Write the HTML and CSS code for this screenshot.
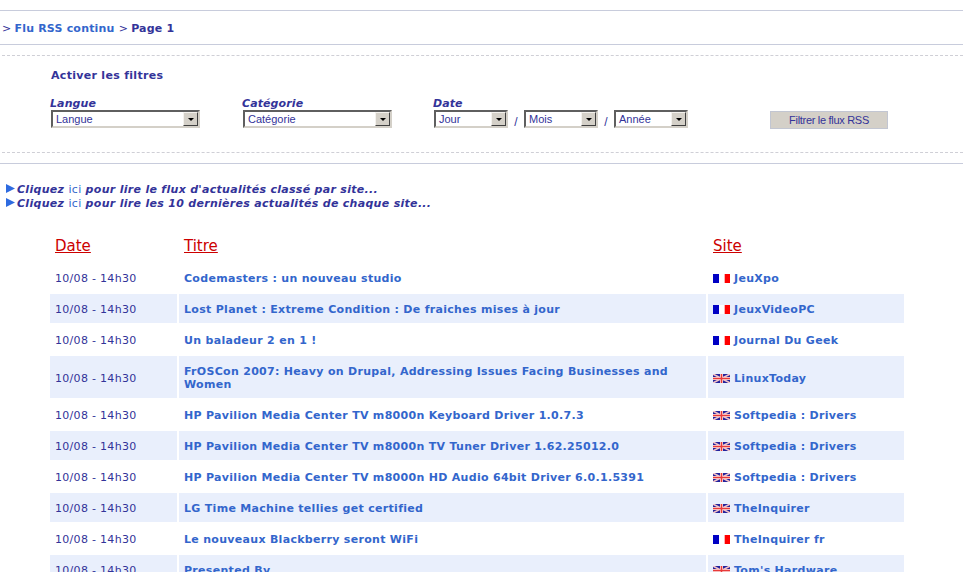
FILE: index.html
```html
<!DOCTYPE html>
<html lang="fr">
<head>
<meta charset="utf-8">
<title>Flu RSS continu</title>
<link rel="stylesheet" href="styles.css">
</head>
<body>
<svg class="defs" width="0" height="0" aria-hidden="true">
  <defs>
    <symbol id="fr" viewBox="0 0 17 9">
      <rect width="17" height="9" fill="#fff"/>
      <rect width="6" height="9" fill="#0000c4"/>
      <rect x="11" width="1" height="9" fill="#ffb0b0"/>
      <rect x="12" width="5" height="9" fill="#ff0000"/>
    </symbol>
    <symbol id="uk" viewBox="0 0 17 9">
      <rect width="17" height="9" fill="#22229c"/>
      <path d="M0 0L17 9M17 0L0 9" stroke="#f4c4c8" stroke-width="1.6"/>
      <path d="M8.5 0V9M0 4.5H17" stroke="#fbe4e4" stroke-width="3"/>
      <path d="M8.5 0V9M0 4.5H17" stroke="#e83a3a" stroke-width="1.5"/>
    </symbol>
    <symbol id="tri" viewBox="0 0 9 9">
      <path d="M0 0L9 4.5L0 9Z" fill="#2e6be0"/>
    </symbol>
  </defs>
</svg>

<div class="crumb"><span class="sep">&gt;</span> <a href="#">Flu RSS continu</a> <span class="sep">&gt;</span> Page 1</div>

<form class="filters">
  <h2 class="filters-title">Activer les filtres</h2>
  <div class="filter-row">
    <div class="field field-lang">
      <label class="field-label">Langue</label>
      <div class="select select-wide"><span class="select-text">Langue</span><span class="select-btn"><i></i></span></div>
    </div>
    <div class="field field-cat">
      <label class="field-label">Catégorie</label>
      <div class="select select-wide"><span class="select-text">Catégorie</span><span class="select-btn"><i></i></span></div>
    </div>
    <div class="field field-date">
      <label class="field-label">Date</label>
      <div class="date-row">
        <div class="select select-small"><span class="select-text">Jour</span><span class="select-btn"><i></i></span></div>
        <span class="slash">/</span>
        <div class="select select-small"><span class="select-text">Mois</span><span class="select-btn"><i></i></span></div>
        <span class="slash">/</span>
        <div class="select select-small"><span class="select-text">Année</span><span class="select-btn"><i></i></span></div>
      </div>
    </div>
    <button class="submit" type="button">Filtrer le flux RSS</button>
  </div>
</form>

<div class="intro">
  <p><svg class="tri"><use href="#tri"/></svg>Cliquez <a href="#">ici</a> pour lire le flux d'actualités classé par site...</p>
  <p><svg class="tri"><use href="#tri"/></svg>Cliquez <a href="#">ici</a> pour lire les 10 dernières actualités de chaque site...</p>
</div>

<table class="feed">
  <colgroup><col class="c-date"><col class="c-title"><col class="c-site"></colgroup>
  <thead>
    <tr><th><a href="#">Date</a></th><th><a href="#">Titre</a></th><th><a href="#">Site</a></th></tr>
  </thead>
  <tbody>
    <tr><td>10/08 - 14h30</td><td><a href="#">Codemasters : un nouveau studio</a></td><td><svg class="flag"><use href="#fr"/></svg><a href="#">JeuXpo</a></td></tr>
    <tr><td>10/08 - 14h30</td><td><a href="#">Lost Planet : Extreme Condition : De fraiches mises à jour</a></td><td><svg class="flag"><use href="#fr"/></svg><a href="#">JeuxVideoPC</a></td></tr>
    <tr><td>10/08 - 14h30</td><td><a href="#">Un baladeur 2 en 1 !</a></td><td><svg class="flag"><use href="#fr"/></svg><a href="#">Journal Du Geek</a></td></tr>
    <tr><td>10/08 - 14h30</td><td><a href="#">FrOSCon 2007: Heavy on Drupal, Addressing Issues Facing Businesses and Women</a></td><td><svg class="flag"><use href="#uk"/></svg><a href="#">LinuxToday</a></td></tr>
    <tr><td>10/08 - 14h30</td><td><a href="#">HP Pavilion Media Center TV m8000n Keyboard Driver 1.0.7.3</a></td><td><svg class="flag"><use href="#uk"/></svg><a href="#">Softpedia : Drivers</a></td></tr>
    <tr><td>10/08 - 14h30</td><td><a href="#">HP Pavilion Media Center TV m8000n TV Tuner Driver 1.62.25012.0</a></td><td><svg class="flag"><use href="#uk"/></svg><a href="#">Softpedia : Drivers</a></td></tr>
    <tr><td>10/08 - 14h30</td><td><a href="#">HP Pavilion Media Center TV m8000n HD Audio 64bit Driver 6.0.1.5391</a></td><td><svg class="flag"><use href="#uk"/></svg><a href="#">Softpedia : Drivers</a></td></tr>
    <tr><td>10/08 - 14h30</td><td><a href="#">LG Time Machine tellies get certified</a></td><td><svg class="flag"><use href="#uk"/></svg><a href="#">TheInquirer</a></td></tr>
    <tr><td>10/08 - 14h30</td><td><a href="#">Le nouveaux Blackberry seront WiFi</a></td><td><svg class="flag"><use href="#fr"/></svg><a href="#">TheInquirer fr</a></td></tr>
    <tr><td>10/08 - 14h30</td><td><a href="#">Presented By</a></td><td><svg class="flag"><use href="#uk"/></svg><a href="#">Tom's Hardware</a></td></tr>
  </tbody>
</table>
</body>
</html>
```

FILE: styles.css
```css
html, body {
  margin: 0;
  height: 572px;
  overflow: hidden;
  background: #fff;
}
body {
  padding-top: 10px;
  box-sizing: border-box;
  font-family: "DejaVu Sans", Verdana, sans-serif;
  font-size: 11px;
  color: #333399;
}
a { color: #3366cc; text-decoration: none; }
.defs { position: absolute; }

.crumb {
  height: 33px;
  line-height: 36px;
  padding-left: 2px;
  border-top: 1px solid #c8ccdc;
  border-bottom: 1px solid #c8ccdc;
  font-weight: bold;
  letter-spacing: 0.2px;
}
.sep { font-weight: normal; letter-spacing: -0.8px; }

.filters {
  margin: 10px 0 10px 2px;
  height: 96px;
  border-top: 1px dashed #cfcfd6;
  border-bottom: 1px dashed #cfcfd6;
  padding-left: 48px;
}
.filters-title {
  margin: 0;
  padding: 13px 0 0 1px;
  font-size: 11px;
  line-height: 14px;
  font-weight: bold;
  letter-spacing: 0.3px;
}
.filter-row {
  display: flex;
  align-items: flex-start;
  margin-top: 14px;
}
.field-lang { width: 192px; }
.field-cat { width: 190px; }
.field-date { width: 338px; }
.field-label {
  display: block;
  font-style: italic;
  font-weight: bold;
  line-height: 13px;
  letter-spacing: 0.1px;
}
.field-date .field-label { padding-left: 1px; }
.select {
  display: flex;
  height: 18px;
  box-sizing: border-box;
  margin-left: 1px;
  border-style: solid;
  border-width: 2px;
  border-color: #5f5f5f #d4d0c8 #d4d0c8 #5f5f5f;
  background: #fff;
  font-family: "Liberation Sans", Arial, sans-serif;
  font-size: 11px;
  line-height: 14px;
}
.select-wide { width: 149px; }
.select-small { width: 74px; margin-left: 0; }
.select-text { flex: 1; padding-left: 3px; }
.select-btn {
  width: 15px;
  height: 14px;
  box-sizing: border-box;
  background: #d4d0c8;
  border-style: solid;
  border-width: 1px;
  border-color: #f4f2ee #404040 #404040 #f4f2ee;
  display: flex;
  align-items: center;
  justify-content: center;
}
.select-btn i {
  width: 0;
  height: 0;
  border-style: solid;
  border-width: 3px 3px 0 3px;
  border-color: #000 transparent transparent transparent;
}
.date-row {
  display: flex;
  height: 18px;
  margin-left: 2px;
}
.slash {
  width: 16px;
  text-align: center;
  font-size: 12px;
  line-height: 24px;
  font-family: "Liberation Sans", Arial, sans-serif;
}
.submit {
  width: 118px;
  height: 18px;
  margin-top: 14px;
  padding: 0;
  background: #d4d0c8;
  border: 1px solid #c2c6d2;
  color: #333399;
  font-family: "Liberation Sans", Arial, sans-serif;
  font-size: 11px;
  letter-spacing: -0.3px;
}

.intro {
  border-top: 1px solid #c8ccdc;
  padding: 19px 0 0 6px;
  font-style: italic;
  font-weight: bold;
  line-height: 14px;
  letter-spacing: 0.3px;
}
.intro p { margin: 0; }
.intro a { font-weight: normal; font-style: normal; }
.tri {
  width: 9px;
  height: 9px;
  margin-right: 2px;
}

.feed {
  margin: 15px 0 0 48px;
  width: 858px;
  table-layout: fixed;
  border-collapse: separate;
  border-spacing: 2px;
  letter-spacing: 0.3px;
}
.c-date { width: 127px; }
.c-site { width: 196px; }
.feed th {
  height: 31px;
  padding: 2px 5px 0;
  text-align: left;
  font-size: 15px;
  font-weight: normal;
  letter-spacing: 0;
}
.feed th a {
  color: #cc0000;
  text-decoration: underline;
}
.feed td {
  padding: 9px 5px 7px;
  line-height: 13px;
  vertical-align: middle;
}
.feed td a { font-weight: bold; }
.feed tbody tr:nth-child(even) td { background: #e9effc; }
.flag {
  width: 17px;
  height: 9px;
  margin-right: 4px;
  vertical-align: -1px;
}
```
